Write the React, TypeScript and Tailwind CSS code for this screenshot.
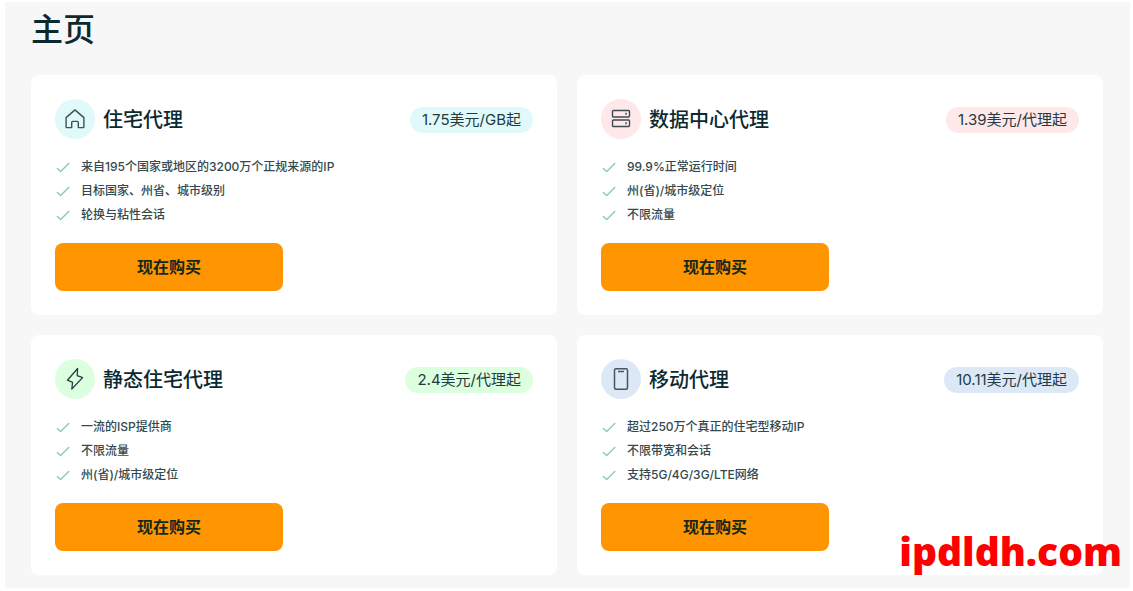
import type { ReactNode } from "react"

type Plan = {
  title: string
  price: string
  tint: string
  icon: ReactNode
  features: string[]
}

function HomeIcon() {
  return (
    <svg viewBox="0 0 20 20" className="size-5" fill="none" stroke="#3d5257" strokeWidth="1.4" strokeLinejoin="round" aria-hidden="true">
      <path d="M1.1 8.6 10 .9l8.9 7.700V18a.6.6 0 0 1-.6.6h-5v-5.200a1 1 0 0 0-1-1H7.700a1 1 0 0 0-1 1v5.200h-5a.6.6 0 0 1-.6-.6z" />
    </svg>
  )
}

function ServerIcon() {
  return (
    <svg viewBox="0 0 20 20" className="size-5" fill="none" stroke="#3d4a50" strokeWidth="1.4" aria-hidden="true">
      <rect x="1.500" y="1.500" width="17" height="6.500" rx="1" />
      <rect x="1.500" y="11" width="17" height="6.500" rx="1" />
      <path d="M15 3.700v2M15 13.200v2" />
    </svg>
  )
}

function BoltIcon() {
  return (
    <svg viewBox="0 0 20 24" className="h-6 w-5" fill="none" stroke="#24423f" strokeWidth="1.3" strokeLinejoin="round" aria-hidden="true">
      <path d="M12.600 1.500 2.400 13.200l5.200 2.200-.8 6.600L17.600 10.600l-5.400-2z" />
    </svg>
  )
}

function PhoneIcon() {
  return (
    <svg viewBox="0 0 20 24" className="h-6 w-5" fill="none" stroke="#46545f" strokeWidth="1.5" aria-hidden="true">
      <rect x="3.500" y="1.700" width="13" height="20.600" rx="1.500" />
      <path d="M7 4.500h6" />
    </svg>
  )
}

function CheckIcon() {
  return (
    <svg viewBox="0 0 16 16" className="size-4 shrink-0" fill="none" stroke="#85cdbb" strokeWidth="1.4" aria-hidden="true">
      <path d="m2 9.200 3.700 3.400L14.200 4" />
    </svg>
  )
}

const plans: Plan[] = [
  {
    title: "住宅代理",
    price: "1.75美元/GB起",
    tint: "bg-[#e0f9fa]",
    icon: <HomeIcon />,
    features: ["来自195个国家或地区的3200万个正规来源的IP", "目标国家、州省、城市级别", "轮换与粘性会话"],
  },
  {
    title: "数据中心代理",
    price: "1.39美元/代理起",
    tint: "bg-[#ffe8e9]",
    icon: <ServerIcon />,
    features: ["99.9%正常运行时间", "州(省)/城市级定位", "不限流量"],
  },
  {
    title: "静态住宅代理",
    price: "2.4美元/代理起",
    tint: "bg-[#dcffe0]",
    icon: <BoltIcon />,
    features: ["一流的ISP提供商", "不限流量", "州(省)/城市级定位"],
  },
  {
    title: "移动代理",
    price: "10.11美元/代理起",
    tint: "bg-[#dde8f7]",
    icon: <PhoneIcon />,
    features: ["超过250万个真正的住宅型移动IP", "不限带宽和会话", "支持5G/4G/3G/LTE网络"],
  },
]

function PlanCard({ plan }: { plan: Plan }) {
  return (
    <article className="rounded-lg bg-white p-6">
      <div className="flex items-center justify-between">
        <div className="flex items-center gap-2">
          <span className={`flex size-10 items-center justify-center rounded-full ${plan.tint}`}>{plan.icon}</span>
          <h2 className="pt-[2px] text-xl font-medium">{plan.title}</h2>
        </div>
        <span className={`mt-[2px] rounded-full px-3 text-[15px] leading-[26px] text-[#233b40] ${plan.tint}`}>{plan.price}</span>
      </div>
      <ul className="mt-4 text-xs leading-6 font-medium text-[#33494e]">
        {plan.features.map(feature => (
          <li key={feature} className="flex items-center gap-[10px]">
            <CheckIcon />
            {feature}
          </li>
        ))}
      </ul>
      <button type="button" className="mt-4 h-12 w-[228px] rounded-lg bg-[#ff9500] text-base font-bold text-[#12291c]">
        现在购买
      </button>
    </article>
  )
}

export default function App() {
  return (
    <div className="bg-white pt-[2px] pr-[3px] pb-[3px] pl-[5px] font-['Inter','Noto_Sans_CJK_SC',sans-serif] text-[#0a2a30]">
      <main className="relative bg-[#f7f7f7] pt-2 pr-[27px] pb-[13px] pl-[26px]">
        <h1 className="text-[32px] leading-10 font-medium">主页</h1>
        <div className="mt-[25px] grid grid-cols-2 gap-5">
          {plans.map(plan => (
            <PlanCard key={plan.title} plan={plan} />
          ))}
        </div>
        <p className="absolute right-2 bottom-[10px] font-['Noto_Sans',sans-serif] text-[39px] leading-[54px] font-black text-[#ff0000]">
          ipdldh.com
        </p>
      </main>
    </div>
  )
}
